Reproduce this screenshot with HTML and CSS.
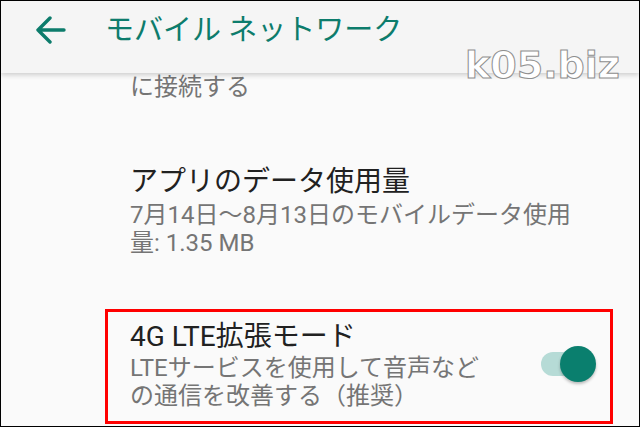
FILE: index.html
```html
<!DOCTYPE html>
<html lang="ja">
<head>
  <meta charset="UTF-8">
  <meta name="viewport" content="width=device-width, initial-scale=1.0">
  <title>モバイル ネットワーク</title>
  <link rel="stylesheet" href="styles.css">
</head>
<body>
  <div class="frame">
    <!-- App bar -->
    <header class="appbar">
      <svg class="back" width="30" height="28" viewBox="0 0 30 28">
        <path d="M2 14H28M14 2L2 14L14 26" fill="none" stroke="currentColor" stroke-width="3.4" stroke-linecap="round" stroke-linejoin="round"/>
      </svg>
      <h1 class="title">モバイル ネットワーク</h1>
    </header>

    <div class="watermark">k05.biz</div>

    <!-- Settings list -->
    <div class="list">
      <div class="item cut">
        <p class="summary">に接続する</p>
      </div>

      <div class="item apps">
        <div class="item-text">
          <p class="item-title">アプリのデータ使用量</p>
          <p class="summary">7月14日〜8月13日のモバイルデータ使用量: 1.35 MB</p>
        </div>
      </div>

      <div class="item lte">
        <div class="item-text">
          <p class="item-title">4G LTE拡張モード</p>
          <p class="summary">LTEサービスを使用して音声などの通信を改善する（推奨）</p>
        </div>
        <div class="switch on">
          <span class="track"></span>
          <span class="thumb"></span>
        </div>
      </div>
    </div>
  </div>
</body>
</html>
```

FILE: styles.css
```css
body {
  margin: 0;
  font-family: Roboto, "Noto Sans CJK JP", sans-serif;
  background: #fafafa;
}
.frame {
  position: relative;
  width: 640px;
  height: 427px;
  box-sizing: border-box;
  border: 1px solid #000;
  background: #fafafa;
  overflow: hidden;
}
p {
  margin: 0;
}

/* app bar */
.appbar {
  position: relative;
  z-index: 1;
  display: flex;
  align-items: center;
  height: 72px;
  padding-bottom: 14px;
  box-sizing: border-box;
  background: #f5f5f5;
  box-shadow: 0 2px 5px rgba(0,0,0,0.18);
  color: #0d7c6c;
}
.back {
  margin-left: 35px;
  flex-shrink: 0;
}
.title {
  margin: 0 0 0 39px;
  font-size: 29px;
  font-weight: 400;
  line-height: 36px;
}

.watermark {
  position: absolute;
  z-index: 2;
  left: 464px;
  top: 44px;
  font-family: "DejaVu Sans", sans-serif;
  font-weight: bold;
  font-size: 38px;
  line-height: 40px;
  color: #fff;
  -webkit-text-stroke: 1px #8f8f8f;
}

/* list */
.list {
  padding-left: 104px;
}
.item {
  display: flex;
  align-items: center;
  padding-left: 25px;
}
.item-text {
  flex: 1;
}
.item-title {
  font-size: 28px;
  line-height: 34px;
  color: #212121;
}
.summary {
  font-size: 24px;
  line-height: 28px;
  color: #757575;
}
.cut {
  height: 28px;
}
.apps {
  margin-top: 64px;
  padding-right: 60px;
}
.apps .summary {
  margin-top: 2px;
}
.lte {
  margin-top: 52px;
  width: 508px;
  box-sizing: border-box;
  border: 3px solid #f00;
  padding: 8px 12px 11px 22px;
}
.lte .item-text {
  padding-right: 48px;
}

/* switch */
.switch {
  position: relative;
  width: 58px;
  height: 36px;
  flex-shrink: 0;
  margin-top: -2px;
}
.track {
  position: absolute;
  left: 1px;
  top: 6px;
  width: 50px;
  height: 24px;
  border-radius: 12px;
  background: #b6dbd6;
}
.thumb {
  position: absolute;
  left: 20px;
  top: 0;
  width: 36px;
  height: 36px;
  border-radius: 50%;
  background: #0a7f6e;
  box-shadow: 0 2px 3px rgba(0,0,0,0.25);
}
```
